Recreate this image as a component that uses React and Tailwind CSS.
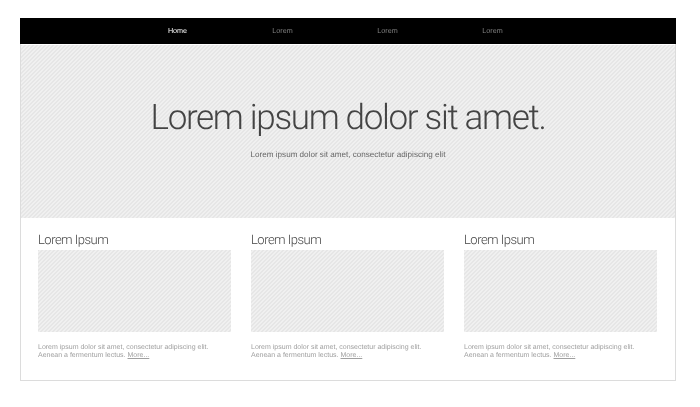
import React from 'react';

const stripes = 'bg-[repeating-linear-gradient(135deg,#e6e6e6_0px,#e6e6e6_1.414px,#f0f0f0_1.414px,#f0f0f0_2.828px)]';

const navItems = ['Home', 'Lorem', 'Lorem', 'Lorem'];

const Card = () => (
    <div className="w-[193px]">
        <h2 className="font-['Roboto',sans-serif] font-light text-[13px] leading-[16px] tracking-[-0.5px] text-[#444] mb-[1px]">Lorem Ipsum</h2>
        <div className={`h-[82px] ${stripes}`}></div>
        <p className="mt-[12px] text-[7px] leading-[8px] text-[#a0a0a0] whitespace-nowrap">
            Lorem ipsum dolor sit amet, consectetur adipiscing elit.
            <br />
            Aenean a fermentum lectus. <span className="underline">More...</span>
        </p>
    </div>
);

export default function App() {
    return (
        <div className="w-[700px] h-[407px] pt-[18px] pl-[20px] font-['Liberation_Sans',sans-serif] will-change-transform [text-rendering:geometricPrecision]">
            <div className="w-[656px] h-[363px] border-x border-b border-[#dcdcdc]">
                <nav className="h-[26px] -mx-px bg-black flex items-center pl-[105px] text-[7.2px]">
                    {navItems.map((item, i) => (
                        <span key={i} className={`w-[105px] text-center ${i === 0 ? 'text-white' : 'text-[#808080]'}`}>
                            {item}
                        </span>
                    ))}
                </nav>
                <section className={`h-[173px] mt-px flex flex-col items-center ${stripes}`}>
                    <h1 className="mt-[51px] font-['Roboto',sans-serif] font-light text-[35px] leading-[44px] tracking-[-1.33px] text-[#444]">Lorem ipsum dolor sit amet.</h1>
                    <p className="mt-[9px] text-[8.1px] leading-[12px] text-[#666]">Lorem ipsum dolor sit amet, consectetur adipiscing elit</p>
                </section>
                <section className="flex gap-[20px] pl-[17px] pt-[15px]">
                    <Card />
                    <Card />
                    <Card />
                </section>
            </div>
        </div>
    );
}
